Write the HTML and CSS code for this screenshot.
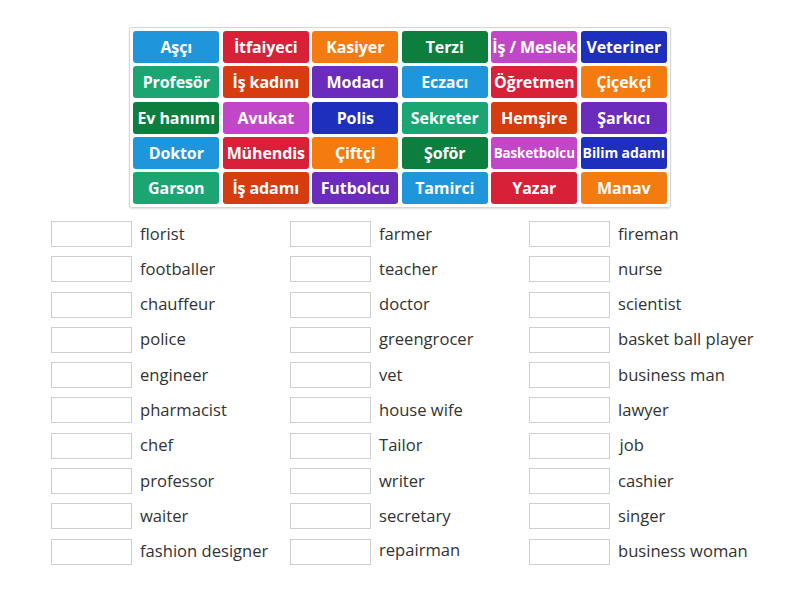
FILE: index.html
```html
<!DOCTYPE html>
<html lang="tr">
<head>
<meta charset="utf-8">
<link rel="stylesheet" href="styles.css">
</head>
<body>
<div class="board">
  <div class="tile c1">Aşçı</div>
  <div class="tile c2">İtfaiyeci</div>
  <div class="tile c3">Kasiyer</div>
  <div class="tile c4">Terzi</div>
  <div class="tile c5">İş / Meslek</div>
  <div class="tile c6">Veteriner</div>
  <div class="tile c7">Profesör</div>
  <div class="tile c8">İş kadını</div>
  <div class="tile c9">Modacı</div>
  <div class="tile c1">Eczacı</div>
  <div class="tile c2">Öğretmen</div>
  <div class="tile c3">Çiçekçi</div>
  <div class="tile c4">Ev hanımı</div>
  <div class="tile c5">Avukat</div>
  <div class="tile c6">Polis</div>
  <div class="tile c7">Sekreter</div>
  <div class="tile c8">Hemşire</div>
  <div class="tile c9">Şarkıcı</div>
  <div class="tile c1">Doktor</div>
  <div class="tile c2">Mühendis</div>
  <div class="tile c3">Çiftçi</div>
  <div class="tile c4">Şoför</div>
  <div class="tile c5 xs">Basketbolcu</div>
  <div class="tile c6 sm">Bilim adamı</div>
  <div class="tile c7">Garson</div>
  <div class="tile c8">İş adamı</div>
  <div class="tile c9">Futbolcu</div>
  <div class="tile c1">Tamirci</div>
  <div class="tile c2">Yazar</div>
  <div class="tile c3">Manav</div>
</div>

<div class="answers">
  <div class="col">
    <div class="row"><span class="box"></span><span class="label">florist</span></div>
    <div class="row"><span class="box"></span><span class="label">footballer</span></div>
    <div class="row"><span class="box"></span><span class="label">chauffeur</span></div>
    <div class="row"><span class="box"></span><span class="label">police</span></div>
    <div class="row"><span class="box"></span><span class="label">engineer</span></div>
    <div class="row"><span class="box"></span><span class="label">pharmacist</span></div>
    <div class="row"><span class="box"></span><span class="label">chef</span></div>
    <div class="row"><span class="box"></span><span class="label">professor</span></div>
    <div class="row"><span class="box"></span><span class="label">waiter</span></div>
    <div class="row"><span class="box"></span><span class="label">fashion designer</span></div>
  </div>
  <div class="col">
    <div class="row"><span class="box"></span><span class="label">farmer</span></div>
    <div class="row"><span class="box"></span><span class="label">teacher</span></div>
    <div class="row"><span class="box"></span><span class="label">doctor</span></div>
    <div class="row"><span class="box"></span><span class="label">greengrocer</span></div>
    <div class="row"><span class="box"></span><span class="label">vet</span></div>
    <div class="row"><span class="box"></span><span class="label">house wife</span></div>
    <div class="row"><span class="box"></span><span class="label">Tailor</span></div>
    <div class="row"><span class="box"></span><span class="label">writer</span></div>
    <div class="row"><span class="box"></span><span class="label">secretary</span></div>
    <div class="row"><span class="box"></span><span class="label up">repairman</span></div>
  </div>
  <div class="col">
    <div class="row"><span class="box"></span><span class="label">fireman</span></div>
    <div class="row"><span class="box"></span><span class="label">nurse</span></div>
    <div class="row"><span class="box"></span><span class="label">scientist</span></div>
    <div class="row"><span class="box"></span><span class="label">basket ball player</span></div>
    <div class="row"><span class="box"></span><span class="label">business man</span></div>
    <div class="row"><span class="box"></span><span class="label">lawyer</span></div>
    <div class="row"><span class="box"></span><span class="label shift">job</span></div>
    <div class="row"><span class="box"></span><span class="label">cashier</span></div>
    <div class="row"><span class="box"></span><span class="label">singer</span></div>
    <div class="row"><span class="box"></span><span class="label">business woman</span></div>
  </div>
</div>
</body>
</html>
```

FILE: styles.css
```css
html, body {
  margin: 0;
  padding: 0;
  background: #ffffff;
}

body {
  font-family: "Open Sans", "DejaVu Sans", sans-serif;
  color: #333333;
}

.board {
  box-sizing: border-box;
  width: 541.5px;
  margin: 27px auto 0;
  padding: 3px;
  border: 1px solid #d6d6d6;
  border-radius: 3px;
  box-shadow: 0 1px 2px rgba(0, 0, 0, 0.12);
  display: grid;
  grid-template-columns: repeat(6, 86px);
  grid-auto-rows: 32px;
  column-gap: 3.5px;
  row-gap: 3.25px;
  background: #ffffff;
}

.tile {
  display: flex;
  align-items: center;
  justify-content: center;
  border-radius: 3px;
  color: #ffffff;
  font-weight: 700;
  font-size: 16px;
  white-space: nowrap;
  overflow: hidden;
  letter-spacing: -0.1px;
}

.tile.sm { font-size: 14px; }
.tile.xs { font-size: 13.4px; }

.c1 { background: #1f96dc; }
.c2 { background: #d82039; }
.c3 { background: #f47b10; }
.c4 { background: #0c7e3e; }
.c5 { background: #c247c8; }
.c6 { background: #1e2fbe; }
.c7 { background: #1aa573; }
.c8 { background: #d63c10; }
.c9 { background: #6b2bbc; }

.answers {
  margin: 13px 0 0 51px;
  display: grid;
  grid-template-columns: repeat(3, 239px);
}

.col {
  display: flex;
  flex-direction: column;
  gap: 9.3px;
}

.row {
  display: flex;
  align-items: center;
  height: 26px;
}

.box {
  box-sizing: border-box;
  width: 80.5px;
  height: 26px;
  border: 1px solid #cfcfcf;
  background: #ffffff;
  flex: none;
}

.label {
  margin-left: 8.5px;
  margin-top: -1px;
  font-size: 16.6px;
  line-height: 26px;
  color: #333333;
  white-space: nowrap;
}

.label.up { margin-top: -4px; }
.label.shift { margin-left: 10px; }
```
